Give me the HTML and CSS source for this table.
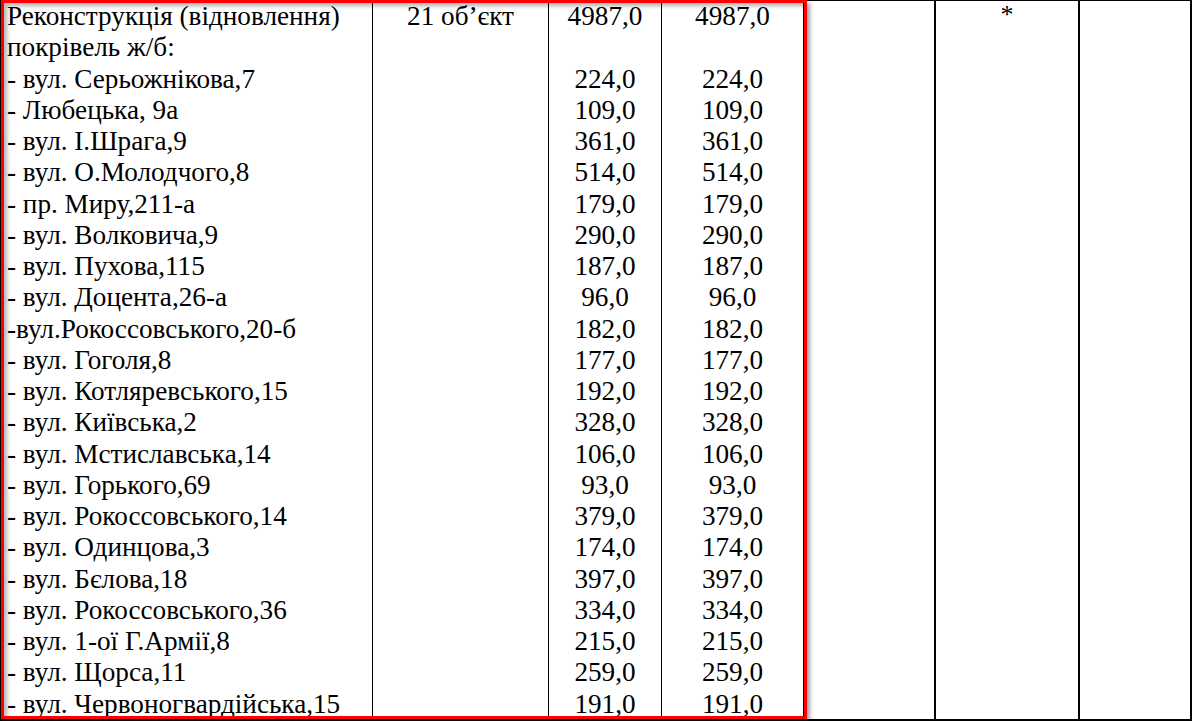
FILE: index.html
```html
<!DOCTYPE html>
<html lang="uk">
<head>
<meta charset="utf-8">
<title>Реконструкція покрівель</title>
<link rel="stylesheet" href="styles.css">
</head>
<body>
<div class="page">
  <div class="sheet">
    <div class="cell c1 left">
      <div>Реконструкція (відновлення)</div>
      <div>покрівель ж/б:</div>
      <div>- вул. Серьожнікова,7</div>
      <div>- Любецька, 9а</div>
      <div>- вул. І.Шрага,9</div>
      <div>- вул. О.Молодчого,8</div>
      <div>- пр. Миру,211-а</div>
      <div>- вул. Волковича,9</div>
      <div>- вул. Пухова,115</div>
      <div>- вул. Доцента,26-а</div>
      <div>-вул.Рокоссовського,20-б</div>
      <div>- вул. Гоголя,8</div>
      <div>- вул. Котляревського,15</div>
      <div>- вул. Київська,2</div>
      <div>- вул. Мстиславська,14</div>
      <div>- вул. Горького,69</div>
      <div>- вул. Рокоссовського,14</div>
      <div>- вул. Одинцова,3</div>
      <div>- вул. Бєлова,18</div>
      <div>- вул. Рокоссовського,36</div>
      <div>- вул. 1-ої Г.Армії,8</div>
      <div>- вул. Щорса,11</div>
      <div>- вул. Червоногвардійська,15</div>
    </div>
    <div class="cell c2 center">
      <div>21 об’єкт</div>
    </div>
    <div class="cell c3 center">
      <div>4987,0</div>
      <div>&nbsp;</div>
      <div>224,0</div>
      <div>109,0</div>
      <div>361,0</div>
      <div>514,0</div>
      <div>179,0</div>
      <div>290,0</div>
      <div>187,0</div>
      <div>96,0</div>
      <div>182,0</div>
      <div>177,0</div>
      <div>192,0</div>
      <div>328,0</div>
      <div>106,0</div>
      <div>93,0</div>
      <div>379,0</div>
      <div>174,0</div>
      <div>397,0</div>
      <div>334,0</div>
      <div>215,0</div>
      <div>259,0</div>
      <div>191,0</div>
    </div>
    <div class="cell c4 center">
      <div>4987,0</div>
      <div>&nbsp;</div>
      <div>224,0</div>
      <div>109,0</div>
      <div>361,0</div>
      <div>514,0</div>
      <div>179,0</div>
      <div>290,0</div>
      <div>187,0</div>
      <div>96,0</div>
      <div>182,0</div>
      <div>177,0</div>
      <div>192,0</div>
      <div>328,0</div>
      <div>106,0</div>
      <div>93,0</div>
      <div>379,0</div>
      <div>174,0</div>
      <div>397,0</div>
      <div>334,0</div>
      <div>215,0</div>
      <div>259,0</div>
      <div>191,0</div>
    </div>
    <div class="cell c5"></div>
    <div class="cell c6 center">
      <div class="star">*</div>
    </div>
    <div class="cell c7"></div>
  </div>
  <div class="highlight"></div>
</div>
</body>
</html>
```

FILE: styles.css
```css
html, body {
  margin: 0;
  padding: 0;
  background: #ffffff;
  font-family: "Liberation Serif", "Times New Roman", Tinos, "DejaVu Serif", serif;
}

.page {
  position: relative;
  width: 1192px;
  height: 721px;
  overflow: hidden;
}

.sheet {
  display: grid;
  grid-template-columns: 372px 176px 113px 142px 131px 144px 114px;
  grid-template-rows: 718px;
  border-top: 1px solid #000;
  border-bottom: 2px solid #000;
  font-family: "Liberation Serif", "Times New Roman", Tinos, "DejaVu Serif", serif;
  font-size: 27.2px;
  line-height: 31.25px;
  color: #000;
}

.cell {
  box-sizing: border-box;
  border-left: 1px solid #000;
  overflow: hidden;
  white-space: nowrap;
}

.c6, .c7 {
  border-left: 2px solid #000;
}

.c7 {
  border-right: 2px solid #000;
}

.left {
  padding-left: 6px;
  text-align: left;
}

.center {
  text-align: center;
}

.star {
  font-size: 26px;
  line-height: 28px;
}

.highlight {
  position: absolute;
  left: 1px;
  top: 0;
  width: 806px;
  height: 719px;
  box-sizing: border-box;
  border: 3px solid #ff0000;
  box-shadow: 3px 3px 4px rgba(0, 0, 0, 0.35), inset 3px 3px 4px rgba(0, 0, 0, 0.3);
  pointer-events: none;
}
```
